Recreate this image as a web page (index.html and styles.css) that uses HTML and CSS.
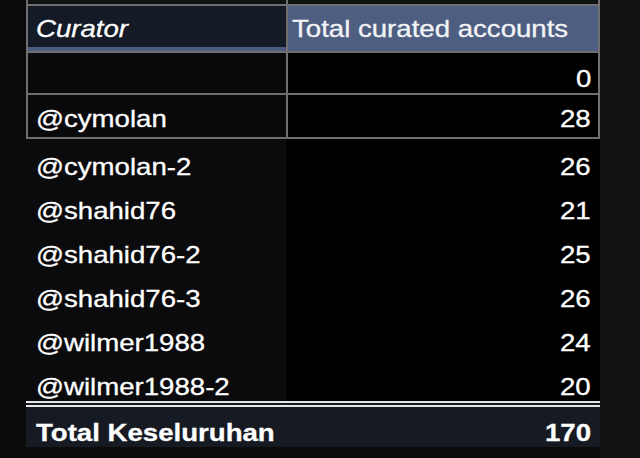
FILE: index.html
```html
<!DOCTYPE html>
<html lang="id">
<head>
<meta charset="utf-8">
<title>Curators</title>
<link rel="stylesheet" href="styles.css">
</head>
<body>
<table class="curators">
  <tbody>
    <tr class="prev"><td class="c1"></td><td class="c2"></td></tr>
    <tr class="head">
      <th class="c1 name-h"><span class="t">Curator</span></th>
      <th class="c2 num-h"><span class="t">Total curated accounts</span></th>
    </tr>
    <tr class="boxed r0">
      <td class="c1"></td>
      <td class="c2 num"><span class="t tr">0</span></td>
    </tr>
    <tr class="boxed r1 last-boxed">
      <td class="c1"><span class="t">@cymolan</span></td>
      <td class="c2 num"><span class="t tr">28</span></td>
    </tr>
    <tr class="plain">
      <td class="c1"><span class="t">@cymolan-2</span></td>
      <td class="c2 num"><span class="t tr">26</span></td>
    </tr>
    <tr class="plain">
      <td class="c1"><span class="t">@shahid76</span></td>
      <td class="c2 num"><span class="t tr">21</span></td>
    </tr>
    <tr class="plain">
      <td class="c1"><span class="t">@shahid76-2</span></td>
      <td class="c2 num"><span class="t tr">25</span></td>
    </tr>
    <tr class="plain">
      <td class="c1"><span class="t">@shahid76-3</span></td>
      <td class="c2 num"><span class="t tr">26</span></td>
    </tr>
    <tr class="plain">
      <td class="c1"><span class="t">@wilmer1988</span></td>
      <td class="c2 num"><span class="t tr">24</span></td>
    </tr>
    <tr class="plain last-plain">
      <td class="c1"><span class="t">@wilmer1988-2</span></td>
      <td class="c2 num"><span class="t tr">20</span></td>
    </tr>
    <tr class="total">
      <td class="c1"><span class="t">Total Keseluruhan</span></td>
      <td class="c2 num"><span class="t tr">170</span></td>
    </tr>
  </tbody>
</table>
</body>
</html>
```

FILE: styles.css
```css
html, body {
  margin: 0;
  padding: 0;
}
body {
  width: 640px;
  height: 458px;
  overflow: hidden;
  background: linear-gradient(to right, #0b0b0b 600px, #111111 600px);
  font-family: "Liberation Sans", Arial, sans-serif;
  color: #ffffff;
}

.curators {
  margin-left: 26px;
  width: 574px;
  border-collapse: separate;
  border-spacing: 0;
  table-layout: fixed;
  font-size: 24px;
  line-height: 28px;
}

.curators td,
.curators th {
  box-sizing: border-box;
  padding: 0;
  vertical-align: bottom;
  text-align: left;
  font-weight: normal;
  white-space: nowrap;
}

.c1 {
  width: 260px;
  padding-left: 8px !important;
}
.c2 {
  width: 314px;
}

.t {
  display: inline-block;
  transform: scaleX(1.15);
  transform-origin: left bottom;
  -webkit-text-stroke: 0.3px currentColor;
}
.tr {
  transform-origin: right bottom;
}

.num {
  text-align: right !important;
  padding-right: 7px !important;
}

/* cut-off previous row at the top */
.prev {
  height: 4px;
}
.prev td {
  background: #0e1210;
  border-left: 2px solid #6f6f6f;
  font-size: 0;
  line-height: 0;
}
.prev .c2 {
  border-right: 2px solid #6f6f6f;
}

/* header */
.head {
  height: 47px;
}
.head th {
  border-top: 2px solid #6f6f6f;
  border-left: 2px solid #6f6f6f;
  padding-bottom: 8px;
}
.head .c2 {
  border-right: 2px solid #6f6f6f;
  background: #4d5e81;
  padding-left: 4px;
  color: #f3f4f6;
}
.name-h {
  background: #141a26;
  box-shadow: inset 0 -4px 0 #4b5c7e;
  font-style: italic;
}

/* bordered rows */
.boxed td {
  border-top: 2px solid #6f6f6f;
  border-left: 2px solid #6f6f6f;
}
.boxed .c1 {
  background: #0a0a0d;
}
.boxed .c2 {
  border-right: 2px solid #6f6f6f;
  background: #000000;
}
.r0 {
  height: 42px;
}
.r1 {
  height: 46px;
}
.r1 td {
  border-bottom: 2px solid #6f6f6f;
  padding-bottom: 4px;
}

/* plain rows */
.plain {
  height: 44px;
}
.plain td {
  padding-bottom: 2px;
  border-left: 2px solid transparent;
}
.plain .c1 {
  background: #0b0b0d;
}
.plain .c2 {
  background: #000000;
  border-right: 2px solid #000000;
}
.last-plain {
  height: 42px;
}
.last-plain td {
  padding-bottom: 0;
}

/* total row */
.total {
  height: 46px;
}
.total td {
  border-top: 6px double #e6e6e6;
  background: #161a22;
  font-weight: bold;
  padding-bottom: 0;
}
.total .c1 {
  padding-left: 10px !important;
}
.total .c2 {
  padding-right: 9px !important;
}
```
